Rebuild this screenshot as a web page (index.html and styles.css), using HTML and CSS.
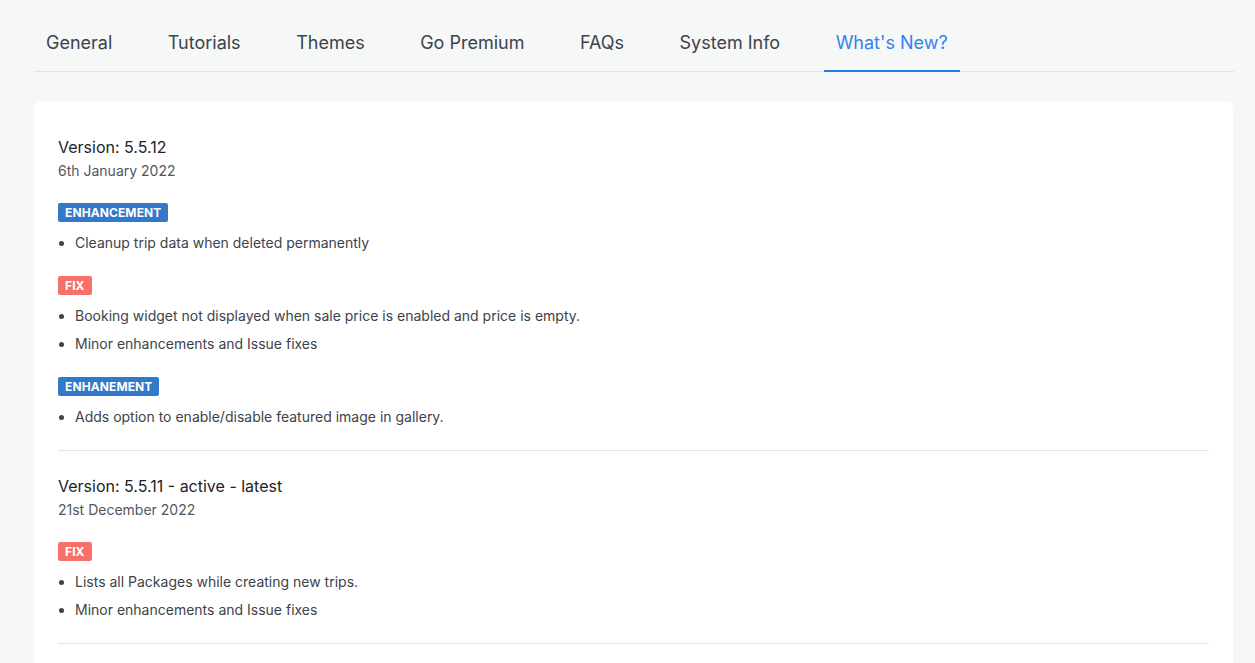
FILE: index.html
```html
<!DOCTYPE html>
<html lang="en">
<head>
<meta charset="utf-8">
<title>What's New?</title>
<link rel="stylesheet" href="styles.css">
</head>
<body>
<div class="wrap">
  <nav class="tabs">
    <a class="tab">General</a>
    <a class="tab">Tutorials</a>
    <a class="tab">Themes</a>
    <a class="tab">Go Premium</a>
    <a class="tab">FAQs</a>
    <a class="tab">System Info</a>
    <a class="tab active">What's New?</a>
  </nav>
  <main class="card">
    <section class="release">
      <h3 class="version">Version: 5.5.12</h3>
      <div class="date">6th January 2022</div>
      <div class="group">
        <span class="badge badge-enh">Enhancement</span>
        <ul class="items">
          <li>Cleanup trip data when deleted permanently</li>
        </ul>
      </div>
      <div class="group">
        <span class="badge badge-fix">Fix</span>
        <ul class="items">
          <li>Booking widget not displayed when sale price is enabled and price is empty.</li>
          <li>Minor enhancements and Issue fixes</li>
        </ul>
      </div>
      <div class="group">
        <span class="badge badge-enh">Enhanement</span>
        <ul class="items">
          <li>Adds option to enable/disable featured image in gallery.</li>
        </ul>
      </div>
    </section>
    <section class="release">
      <h3 class="version">Version: 5.5.11 - active - latest</h3>
      <div class="date">21st December 2022</div>
      <div class="group">
        <span class="badge badge-fix">Fix</span>
        <ul class="items">
          <li>Lists all Packages while creating new trips.</li>
          <li>Minor enhancements and Issue fixes</li>
        </ul>
      </div>
    </section>
  </main>
</div>
</body>
</html>
```
FILE: styles.css
```css
* { box-sizing: border-box; }
html, body { margin: 0; padding: 0; }
body {
  background: #f6f7f7;
  font-family: Inter, "Noto Sans", "Liberation Sans", sans-serif;
  color: #3c434a;
  overflow: hidden;
}
.wrap {
  padding: 16px 21px 0 34px;
}
.tabs {
  display: flex;
  gap: 31.5px;
  border-bottom: 1px solid #e2e4e4;
}
.tab {
  display: block;
  padding: 15px 12px;
  font-size: 18px;
  line-height: 24px;
  color: #3c434a;
  border-bottom: 2px solid transparent;
  margin-bottom: -1px;
  cursor: pointer;
}
.tab.active {
  color: #3582ee;
  border-bottom-color: #1f7fe6;
}
.card {
  margin: 30px 1px 0 0;
  background: #fff;
  border-radius: 6px;
  padding: 10px 24px 0;
  min-height: 600px;
}
.release {
  padding: 24px 0 23px;
  border-bottom: 1px solid #dfe8e6;
}
.version {
  margin: 0;
  font-size: 16px;
  line-height: 22px;
  font-weight: 400;
  color: #1d2327;
}
.date {
  margin-top: 3px;
  font-size: 14px;
  line-height: 20px;
  color: #50575e;
}
.group {
  margin-top: 22px;
}
.group + .group {
  margin-top: 23px;
}
.badge {
  display: inline-block;
  height: 19px;
  padding: 0 7px;
  border-radius: 2px;
  font-size: 12px;
  line-height: 19px;
  font-weight: 700;
  color: #fff;
  text-transform: uppercase;
  letter-spacing: 0.1px;
  vertical-align: top;
}
.badge-enh { background: #3279c9; }
.badge-fix { background: #f8706a; }
.items {
  margin: 10px 0 0;
  padding-left: 17px;
  font-size: 14px;
  line-height: 20px;
  color: #3c434a;
}
.items li + li {
  margin-top: 8px;
}
```
